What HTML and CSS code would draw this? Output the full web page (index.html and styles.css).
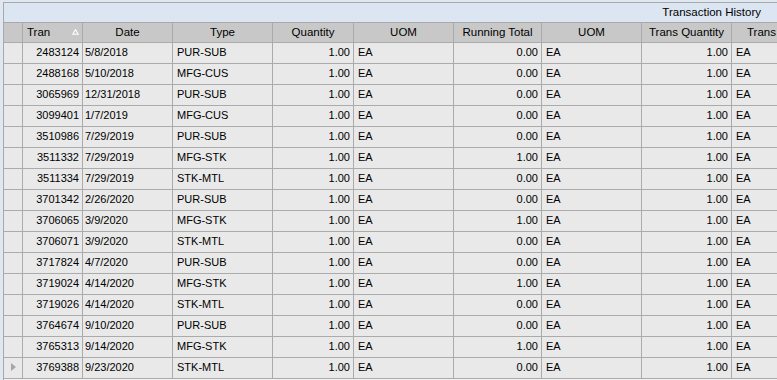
FILE: index.html
```html
<!DOCTYPE html>
<html>
<head>
<meta charset="utf-8">
<link rel="stylesheet" href="styles.css">
</head>
<body>
<div class="panel">
  <div class="title">Transaction History</div>
  <div class="grid">
    <div class="row head">
      <div class="c sel"></div>
      <div class="c tran-h"><span>Tran</span><svg class="sort" width="7" height="6" viewBox="0 0 7 6"><polygon points="3.5,0.7 6.3,5.3 0.7,5.3" fill="none" stroke="#ffffff" stroke-width="1.1"/></svg></div>
      <div class="c">Date</div>
      <div class="c">Type</div>
      <div class="c">Quantity</div>
      <div class="c">UOM</div>
      <div class="c">Running Total</div>
      <div class="c">UOM</div>
      <div class="c">Trans Quantity</div>
      <div class="c">Trans UOM</div>
    </div>
    <div class="row"><div class="c sel"></div><div class="c r">2483124</div><div class="c d">5/8/2018</div><div class="c l">PUR-SUB</div><div class="c r">1.00</div><div class="c l">EA</div><div class="c r">0.00</div><div class="c l">EA</div><div class="c r">1.00</div><div class="c l">EA</div></div>
    <div class="row"><div class="c sel"></div><div class="c r">2488168</div><div class="c d">5/10/2018</div><div class="c l">MFG-CUS</div><div class="c r">1.00</div><div class="c l">EA</div><div class="c r">0.00</div><div class="c l">EA</div><div class="c r">1.00</div><div class="c l">EA</div></div>
    <div class="row"><div class="c sel"></div><div class="c r">3065969</div><div class="c d">12/31/2018</div><div class="c l">PUR-SUB</div><div class="c r">1.00</div><div class="c l">EA</div><div class="c r">0.00</div><div class="c l">EA</div><div class="c r">1.00</div><div class="c l">EA</div></div>
    <div class="row"><div class="c sel"></div><div class="c r">3099401</div><div class="c d">1/7/2019</div><div class="c l">MFG-CUS</div><div class="c r">1.00</div><div class="c l">EA</div><div class="c r">0.00</div><div class="c l">EA</div><div class="c r">1.00</div><div class="c l">EA</div></div>
    <div class="row"><div class="c sel"></div><div class="c r">3510986</div><div class="c d">7/29/2019</div><div class="c l">PUR-SUB</div><div class="c r">1.00</div><div class="c l">EA</div><div class="c r">0.00</div><div class="c l">EA</div><div class="c r">1.00</div><div class="c l">EA</div></div>
    <div class="row"><div class="c sel"></div><div class="c r">3511332</div><div class="c d">7/29/2019</div><div class="c l">MFG-STK</div><div class="c r">1.00</div><div class="c l">EA</div><div class="c r">1.00</div><div class="c l">EA</div><div class="c r">1.00</div><div class="c l">EA</div></div>
    <div class="row"><div class="c sel"></div><div class="c r">3511334</div><div class="c d">7/29/2019</div><div class="c l">STK-MTL</div><div class="c r">1.00</div><div class="c l">EA</div><div class="c r">0.00</div><div class="c l">EA</div><div class="c r">1.00</div><div class="c l">EA</div></div>
    <div class="row"><div class="c sel"></div><div class="c r">3701342</div><div class="c d">2/26/2020</div><div class="c l">PUR-SUB</div><div class="c r">1.00</div><div class="c l">EA</div><div class="c r">0.00</div><div class="c l">EA</div><div class="c r">1.00</div><div class="c l">EA</div></div>
    <div class="row"><div class="c sel"></div><div class="c r">3706065</div><div class="c d">3/9/2020</div><div class="c l">MFG-STK</div><div class="c r">1.00</div><div class="c l">EA</div><div class="c r">1.00</div><div class="c l">EA</div><div class="c r">1.00</div><div class="c l">EA</div></div>
    <div class="row"><div class="c sel"></div><div class="c r">3706071</div><div class="c d">3/9/2020</div><div class="c l">STK-MTL</div><div class="c r">1.00</div><div class="c l">EA</div><div class="c r">0.00</div><div class="c l">EA</div><div class="c r">1.00</div><div class="c l">EA</div></div>
    <div class="row"><div class="c sel"></div><div class="c r">3717824</div><div class="c d">4/7/2020</div><div class="c l">PUR-SUB</div><div class="c r">1.00</div><div class="c l">EA</div><div class="c r">0.00</div><div class="c l">EA</div><div class="c r">1.00</div><div class="c l">EA</div></div>
    <div class="row"><div class="c sel"></div><div class="c r">3719024</div><div class="c d">4/14/2020</div><div class="c l">MFG-STK</div><div class="c r">1.00</div><div class="c l">EA</div><div class="c r">1.00</div><div class="c l">EA</div><div class="c r">1.00</div><div class="c l">EA</div></div>
    <div class="row"><div class="c sel"></div><div class="c r">3719026</div><div class="c d">4/14/2020</div><div class="c l">STK-MTL</div><div class="c r">1.00</div><div class="c l">EA</div><div class="c r">0.00</div><div class="c l">EA</div><div class="c r">1.00</div><div class="c l">EA</div></div>
    <div class="row"><div class="c sel"></div><div class="c r">3764674</div><div class="c d">9/10/2020</div><div class="c l">PUR-SUB</div><div class="c r">1.00</div><div class="c l">EA</div><div class="c r">0.00</div><div class="c l">EA</div><div class="c r">1.00</div><div class="c l">EA</div></div>
    <div class="row"><div class="c sel"></div><div class="c r">3765313</div><div class="c d">9/14/2020</div><div class="c l">MFG-STK</div><div class="c r">1.00</div><div class="c l">EA</div><div class="c r">1.00</div><div class="c l">EA</div><div class="c r">1.00</div><div class="c l">EA</div></div>
    <div class="row"><div class="c sel"><svg class="cur" width="5" height="8" viewBox="0 0 5 8"><polygon points="0,0 5,4 0,8" fill="#a6a6a6"/></svg></div><div class="c r">3769388</div><div class="c d">9/23/2020</div><div class="c l">STK-MTL</div><div class="c r">1.00</div><div class="c l">EA</div><div class="c r">0.00</div><div class="c l">EA</div><div class="c r">1.00</div><div class="c l">EA</div></div>
  </div>
</div>
</body>
</html>
```

FILE: styles.css
```css
html, body {
  margin: 0;
  padding: 0;
  width: 777px;
  height: 380px;
  overflow: hidden;
  background: #dfe7f1;
  font-family: "Liberation Sans", Arial, sans-serif;
  color: #000;
}

.panel {
  margin: 2px 0 0 3px;
  height: 378px;
  border-left: 1px solid #a9a9a9;
  border-top: 1px solid #a9a9a9;
  background: #f2f2f2;
  overflow: hidden;
  box-sizing: border-box;
}

.title {
  height: 19px;
  line-height: 19px;
  background: #dce6f2;
  border-bottom: 1px solid #a9a9a9;
  text-align: right;
  padding-right: 16px;
  font-size: 11.5px;
}

.grid {
  display: flex;
  flex-direction: column;
  gap: 1px;
  width: 818px;
  background: #ababab;
  padding-bottom: 1px;
}

.row {
  display: grid;
  grid-template-columns: 18px 59px 89px 99px 80px 99px 87px 99px 89px 89px;
  gap: 1px;
  height: 20px;
}

.row.head {
  height: 19px;
}

.c {
  background: #e9e9e9;
  font-size: 11px;
  line-height: 19px;
  white-space: nowrap;
  overflow: hidden;
}

.head .c {
  background: #c8c8c8;
  text-align: center;
  font-size: 11.5px;
  line-height: 19px;
}

.head .tran-h {
  display: flex;
  align-items: center;
  justify-content: space-between;
  padding: 0 3px 0 4px;
}

.sort {
  display: block;
  margin-top: -1px;
}

.r {
  text-align: right;
  padding-right: 3px;
}

.l {
  padding-left: 4px;
}

.d {
  padding-left: 2px;
}

.sel {
  display: flex;
  align-items: center;
  padding-left: 7px;
}

.cur {
  display: block;
  margin-top: -2px;
}
```
